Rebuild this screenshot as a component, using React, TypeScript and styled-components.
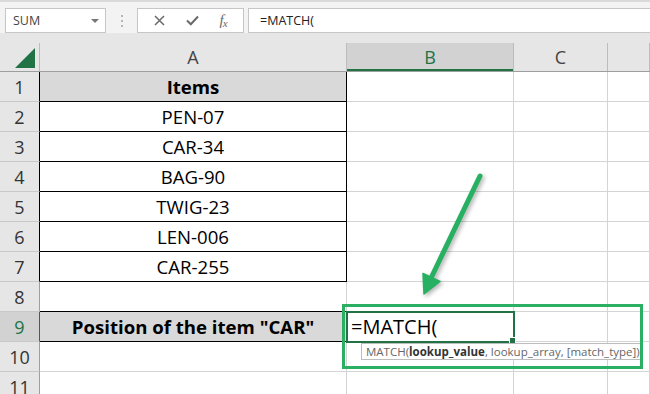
import React from "react";
import styled, { createGlobalStyle } from "styled-components";

const Global = createGlobalStyle`
  html, body { margin: 0; padding: 0; background: #ffffff; }
  body { width: 650px; height: 394px; overflow: hidden; font-family: "Open Sans", "Noto Sans", sans-serif; }
`;

const Page = styled.div`
  position: relative;
  width: 650px;
  height: 394px;
  overflow: hidden;
  background: #fff;
`;

const Toolbar = styled.div`
  height: 33px;
  box-sizing: border-box;
  background: #f3f3f3;
  border-top: 2px solid #dadada;
  display: flex;
  align-items: flex-end;
  padding-left: 5px;
`;

const NameBox = styled.div`
  width: 101px;
  height: 25px;
  box-sizing: border-box;
  background: #fff;
  border: 1px solid #c6c6c6;
  display: flex;
  align-items: center;
  justify-content: space-between;
  padding: 0 6px 0 7px;
  font-size: 12.5px;
  color: #444;
`;

const Caret = styled.span`
  width: 0;
  height: 0;
  border-left: 4px solid transparent;
  border-right: 4px solid transparent;
  border-top: 4px solid #777;
`;

const Dots = styled.div`
  width: 31px;
  height: 25px;
  display: flex;
  flex-direction: column;
  align-items: center;
  justify-content: center;
  gap: 3px;
  & > span { width: 2px; height: 2px; background: #b5b5b5; }
`;

const FxBox = styled.div`
  width: 107px;
  height: 25px;
  box-sizing: border-box;
  background: #fff;
  border: 1px solid #c6c6c6;
  display: flex;
  align-items: center;
  justify-content: space-around;
  padding: 0 6px;
  color: #6a6a6a;
`;

const Fx = styled.span`
  font-family: "Liberation Serif", serif;
  font-style: italic;
  font-size: 15px;
  color: #6a6a6a;
  letter-spacing: -1px;
  & sub { font-size: 11px; vertical-align: -2px; }
`;

const FormulaInput = styled.div`
  flex: 1;
  margin-left: 4px;
  height: 25px;
  box-sizing: border-box;
  background: #fff;
  border: 1px solid #c6c6c6;
  border-right: none;
  display: flex;
  align-items: center;
  padding-left: 11px;
  font-size: 12.5px;
  color: #222;
`;

const COLS = "40px 307px 167px 94px 1fr";

const HeaderRow = styled.div`
  display: grid;
  grid-template-columns: ${COLS};
  background: #e6e6e6;
  padding-top: 10px;
  height: 39px;
  box-sizing: border-box;
  border-bottom: 1px solid #9e9e9e;
`;

const Corner = styled.div`
  border-right: 1px solid #bcbcbc;
  position: relative;
  &::after {
    content: "";
    position: absolute;
    left: 15px;
    top: 5px;
    width: 0;
    height: 0;
    border-left: 20px solid transparent;
    border-bottom: 20px solid #217346;
  }
`;

const ColHeader = styled.div<{ $sel?: boolean }>`
  border-right: 1px solid #bcbcbc;
  display: flex;
  align-items: center;
  justify-content: center;
  font-size: 18px;
  color: ${(p) => (p.$sel ? "#217346" : "#444")};
  background: ${(p) => (p.$sel ? "#d2d2d2" : "transparent")};
  box-shadow: ${(p) => (p.$sel ? "inset 0 -2px 0 #217346" : "none")};
`;

const Row = styled.div`
  display: grid;
  grid-template-columns: ${COLS};
  height: 30px;
`;

const RowHeader = styled.div<{ $sel?: boolean; $edge: string }>`
  background: ${(p) => (p.$sel ? "#d2d2d2" : "#e6e6e6")};
  color: ${(p) => (p.$sel ? "#217346" : "#333")};
  border-right: 1px solid ${(p) => p.$edge};
  border-bottom: 1px solid #c9c9c9;
  display: flex;
  align-items: center;
  justify-content: center;
  font-size: 18px;
`;

const Cell = styled.div<{ $right?: string; $bottom?: string; $fill?: string; $bold?: boolean }>`
  position: relative;
  box-sizing: border-box;
  border-right: 1px solid ${(p) => p.$right || "#d4d4d4"};
  border-bottom: 1px solid ${(p) => p.$bottom || "#d4d4d4"};
  background: ${(p) => p.$fill || "#fff"};
  display: flex;
  align-items: center;
  justify-content: center;
  font-size: 18.6px;
  font-weight: ${(p) => (p.$bold ? 700 : 400)};
  color: #000;
  white-space: nowrap;
`;

const ActiveCell = styled.div`
  position: relative;
  box-sizing: border-box;
  border-bottom: 1px solid #d4d4d4;
  border-right: 1px solid #d4d4d4;
  outline: 2px solid #217346;
  outline-offset: -1px;
  background: #fff;
  display: flex;
  align-items: center;
  padding-left: 4px;
  font-size: 20px;
  color: #000;
  z-index: 1;
  &::after {
    content: "";
    position: absolute;
    right: -3px;
    bottom: -3px;
    width: 5px;
    height: 5px;
    background: #217346;
    border: 1px solid #fff;
  }
`;

const Highlight = styled.div`
  position: absolute;
  left: 342px;
  top: 304px;
  width: 301px;
  height: 65px;
  box-sizing: border-box;
  border: 3px solid #2aaf63;
  z-index: 3;
  pointer-events: none;
`;

const Tooltip = styled.div`
  position: absolute;
  left: 361px;
  top: 343px;
  height: 17px;
  box-sizing: border-box;
  background: #fff;
  border: 1px solid #bdbdbd;
  padding: 0 2px 0 4px;
  display: flex;
  align-items: center;
  font-size: 11.5px;
  color: #666;
  white-space: nowrap;
  z-index: 2;
  & b { color: #333; font-weight: 700; }
`;

const ArrowSvg = styled.svg`
  position: absolute;
  left: 0;
  top: 0;
  width: 650px;
  height: 394px;
  pointer-events: none;
  z-index: 4;
  filter: drop-shadow(2px 2px 2px rgba(0, 0, 0, 0.3));
`;

const items = ["PEN-07", "CAR-34", "BAG-90", "TWIG-23", "LEN-006", "CAR-255"];

export default function App() {
  const rows = [] as React.ReactNode[];
  for (let r = 1; r <= 11; r++) {
    const inTable = r <= 7;
    const edge = r === 9 ? "#217346" : inTable ? "#000" : "#9e9e9e";
    let a: React.ReactNode;
    if (r === 1) {
      a = (
        <Cell $right="#000" $bottom="#000" $fill="#d9d9d9" $bold>
          Items
        </Cell>
      );
    } else if (inTable) {
      a = (
        <Cell $right="#000" $bottom="#000">
          {items[r - 2]}
        </Cell>
      );
    } else if (r === 8) {
      a = <Cell $bottom="#000" />;
    } else if (r === 9) {
      a = (
        <Cell $right="#d4d4d4" $bottom="#000" $fill="#d9d9d9" $bold>
          Position of the item "CAR"
        </Cell>
      );
    } else {
      a = <Cell />;
    }
    rows.push(
      <Row key={r}>
        <RowHeader $sel={r === 9} $edge={edge}>
          {r}
        </RowHeader>
        {a}
        {r === 9 ? <ActiveCell>=MATCH(</ActiveCell> : <Cell />}
        <Cell />
        <Cell />
      </Row>
    );
  }

  return (
    <Page>
      <Global />
      <Toolbar>
        <NameBox>
          SUM
          <Caret />
        </NameBox>
        <Dots>
          <span />
          <span />
          <span />
        </Dots>
        <FxBox>
          <svg width="11" height="11" viewBox="0 0 11 11">
            <path d="M1 1 L10 10 M10 1 L1 10" stroke="#6a6a6a" strokeWidth="1.5" />
          </svg>
          <svg width="13" height="11" viewBox="0 0 13 11">
            <path d="M1 5.5 L4.8 9.3 L12 1.5" stroke="#6a6a6a" strokeWidth="2" fill="none" />
          </svg>
          <Fx>
            f<sub>x</sub>
          </Fx>
        </FxBox>
        <FormulaInput>=MATCH(</FormulaInput>
      </Toolbar>
      <HeaderRow>
        <Corner />
        <ColHeader>A</ColHeader>
        <ColHeader $sel>B</ColHeader>
        <ColHeader>C</ColHeader>
        <ColHeader />
      </HeaderRow>
      {rows}
      <Highlight />
      <Tooltip>
        MATCH(<b>lookup_value</b>, lookup_array, [match_type])
      </Tooltip>
      <ArrowSvg viewBox="0 0 650 394">
        <line x1="480" y1="176" x2="432" y2="276" stroke="#27b062" strokeWidth="5" strokeLinecap="round" />
        <polygon points="424,294 423,273.5 440,281.5" fill="#27b062" stroke="#27b062" strokeWidth="1.5" strokeLinejoin="round" />
      </ArrowSvg>
    </Page>
  );
}
